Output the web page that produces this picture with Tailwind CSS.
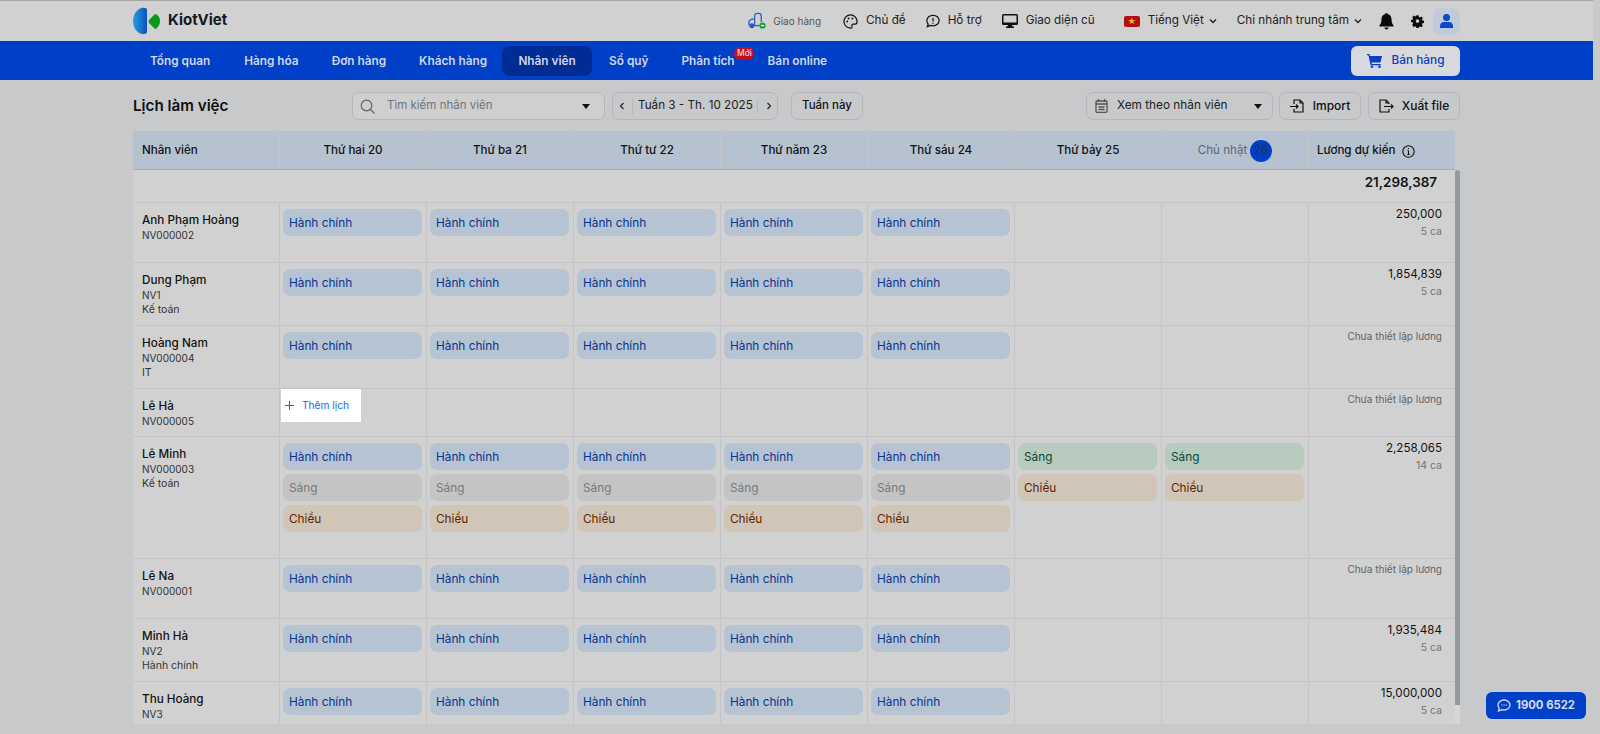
<!DOCTYPE html>
<html lang="en">
<head>
    <meta charset="UTF-8">
    <meta name="viewport" content="width=device-width, initial-scale=1.0">
    <title>KiotViet - Lịch làm việc</title>
    <script src="https://cdn.jsdelivr.net/npm/@tailwindcss/browser@4"></script>
</head>
<body class="bg-[#c8c9cb] text-[#111] font-['Inter',sans-serif] overflow-hidden">
<div class="relative h-[734px] w-[1600px] overflow-hidden">
    <div class="w-[1593px]">
        <!-- top bar -->
        <header class="h-[41px] bg-[#d1d1d1] border-t border-[#a6a6a6] pl-[133px] pr-[133px] flex items-center">
            <svg class="w-[28px] h-[28px] -mt-[1px]" viewBox="0 0 28 28">
                <defs><linearGradient id="lg" x1="0" x2="1" y1="0" y2="0"><stop offset="0" stop-color="#2aa0dc"/><stop offset="1" stop-color="#0a4fc0"/></linearGradient></defs>
                <path d="M9 1C4 2 0 7 0 14s4 12 9 13c3 .5 5-.5 5-2V3c0-1.500-2-2.500-5-2z" fill="url(#lg)"/>
                <path d="M16 13l6-6c2 0 5 3 5 7s-3 8-5 8l-6-6c-.5-.5-.5-2.500 0-3z" fill="#0a9a18"/>
            </svg>
            <span class="ml-[7px] text-[15px] font-bold text-[#141a24] -mt-[1px]">KiotViet</span>
            <div class="ml-auto flex items-center text-[11.700px] text-[#222]">
                <svg class="w-[18px] h-[18px]" viewBox="0 0 19 18" fill="none" stroke="#2558c8" stroke-width="1.300"><path d="M1 14V9l3-2h3v7M7 14h5M7 6V4c0-2 1-3 3-3h1c2 0 3 1 3 3v6"/><circle cx="4" cy="14" r="2" fill="#2558c8"/><rect x="12" y="10.500" width="6.500" height="6.500" rx="3" fill="#16a34a" stroke="none"/><path d="M13.800 13.800h3" stroke="#fff"/></svg>
                <span class="ml-[7px] text-[10px] text-[#555]">Giao hàng</span>
                <svg class="ml-[22px] w-[15px] h-[15px]" viewBox="0 0 16 16" fill="none" stroke="#111" stroke-width="1.300"><path d="M8 1a7 7 0 1 0 0 14c1.500 0 2-1 1.500-2-.5-1.200.3-2.200 1.500-2.200h2c1.300 0 2-1 2-2.500C15 4 12 1 8 1z"/><circle cx="4.500" cy="8" r="1" fill="#111" stroke="none"/><circle cx="6" cy="4.800" r="1" fill="#111" stroke="none"/><circle cx="10" cy="4.800" r="1" fill="#111" stroke="none"/></svg>
                <span class="ml-[8px]">Chủ đề</span>
                <svg class="ml-[20px] w-[14px] h-[14px]" viewBox="0 0 16 16" fill="none" stroke="#111" stroke-width="1.400"><path d="M8 1.500c4 0 7 2.600 7 6s-3 6-7 6c-1 0-2-.2-2.800-.5L1.500 14.500l1-3C1.500 10.500 1 9 1 7.500c0-3.400 3-6 7-6z"/><path d="M8 4.500v4M8 10v1"/></svg>
                <span class="ml-[8px]">Hỗ trợ</span>
                <svg class="ml-[20px] w-[16px] h-[14px]" viewBox="0 0 16 14" fill="#111"><path d="M1.500 0h13A1.500 1.500 0 0 1 16 1.500v8a1.500 1.500 0 0 1-1.500 1.500H10l.4 1.500H12V14H4v-1.500h1.600L6 11H1.500A1.500 1.500 0 0 1 0 9.500v-8A1.500 1.500 0 0 1 1.500 0zm0 1.500v7h13v-7z"/></svg>
                <span class="ml-[8px]">Giao diện cũ</span>
                <span class="ml-[29px] w-[16px] h-[11px] rounded-[2px] bg-[#b50d12] text-[#e8c81c] text-[8px] leading-[11px] text-center">★</span>
                <span class="ml-[8px]">Tiếng Việt</span>
                <svg class="ml-[5px] w-[8px] h-[6px]" viewBox="0 0 8 6" fill="none" stroke="#222" stroke-width="1.400"><path d="M1 1.500l3 3 3-3"/></svg>
                <span class="ml-[20px]">Chi nhánh trung tâm</span>
                <svg class="ml-[5px] w-[8px] h-[6px]" viewBox="0 0 8 6" fill="none" stroke="#222" stroke-width="1.400"><path d="M1 1.500l3 3 3-3"/></svg>
                <svg class="ml-[17px] w-[15px] h-[17px]" viewBox="0 0 15 17" fill="#0a0a0a"><path d="M7.500 0c.7 0 1.200.5 1.200 1.100C11 1.600 12.500 3.600 12.500 6c0 3.500.8 5 2 6.300.4.500.2 1.200-.6 1.200H1.100c-.8 0-1-.7-.6-1.200C1.700 11 2.500 9.500 2.500 6c0-2.400 1.500-4.400 3.800-4.900C6.300.5 6.800 0 7.500 0zM5.500 14.500h4a2 2 0 0 1-4 0z"/></svg>
                <svg class="ml-[17px] w-[13px] h-[13px]" viewBox="0 0 16 16" fill="#0a0a0a"><path fill-rule="evenodd" d="M6.500 0h3l.4 2.200 1.500.7 1.900-1.200 2.100 2.100-1.200 1.900.7 1.500 2.100.4v3l-2.200.4-.7 1.500 1.200 1.900-2.100 2.100-1.900-1.200-1.500.7-.4 2.100h-3l-.4-2.200-1.500-.7-1.900 1.200L.7 13.100l1.200-1.900-.7-1.500L-1 9.300v-3l2.200-.4.7-1.500L.7 2.500 2.800.4l1.900 1.200 1.500-.7zM8 5.500a2.500 2.500 0 1 0 0 5 2.500 2.500 0 0 0 0-5z" transform="translate(.9 .4) scale(.89)"/></svg>
                <span class="ml-[9px] w-[27px] h-[27px] rounded-[8px] bg-[#c0cbd9] flex items-center justify-center">
                    <svg class="w-[13px] h-[14px]" viewBox="0 0 13 14" fill="#0a48c8"><circle cx="6.500" cy="3.500" r="3.500"/><path d="M0 14v-2c0-2.500 2-4 4-4h5c2 0 4 1.500 4 4v2z"/></svg>
                </span>
            </div>
        </header>

        <!-- nav -->
        <nav class="h-[39px] bg-[#0040c8] pl-[133px] pr-[133px] pt-[1px] flex items-center text-[11.800px] font-semibold text-[#cfd6e8]">
            <a class="ml-[17px] pt-[2px]">Tổng quan</a>
            <a class="ml-[34px] pt-[2px]">Hàng hóa</a>
            <a class="ml-[33px] pt-[2px]">Đơn hàng</a>
            <a class="ml-[33px] pt-[2px]">Khách hàng</a>
            <a class="ml-[15px] h-[30px] w-[90px] pt-[2px] rounded-[8px] bg-[#002c94] flex items-center justify-center">Nhân viên</a>
            <a class="ml-[17px] pt-[2px]">Sổ quỹ</a>
            <a class="ml-[33px] pt-[2px] relative">Phân tích
                <span class="absolute left-[53px] -top-[4px] w-[20px] h-[13px] rounded-full bg-[#c50d25] text-[8.500px] leading-[13px] text-center font-medium text-[#e8d6d6]">Mới</span>
            </a>
            <a class="ml-[33px] pt-[2px]">Bán online</a>
            <button class="ml-auto w-[109px] h-[30px] rounded-[6px] bg-[#d8d8df] text-[#0a40c0] font-medium flex items-center justify-center gap-[10px] text-[11.800px]">
                <svg class="w-[15px] h-[14px]" viewBox="0 0 15 14" fill="#0a40c0"><path d="M0 0h2.500l.5 2h12l-1.500 6.500H4.500l.3 1.500h9v1.200H3.500L1.500 1.300H0z"/><circle cx="5" cy="12.700" r="1.300"/><circle cx="12.500" cy="12.700" r="1.300"/></svg>
                Bán hàng
            </button>
        </nav>

        <main class="pl-[133px] pr-[133px]">
            <!-- toolbar -->
            <div class="h-[51px] flex items-center text-[12.500px] pt-[2px] pb-[1px]">
                <h1 class="w-[219px] text-[15.200px] font-semibold text-[#111]">Lịch làm việc</h1>
                <div class="w-[253px] h-[28px] rounded-[7px] border border-[#b5b6ba] bg-[#cfcfd0] flex items-center pl-[7px] pr-[14px] text-[#70747a]">
                    <svg class="w-[15px] h-[15px]" viewBox="0 0 15 15" fill="none" stroke="#666" stroke-width="1.200"><circle cx="6.500" cy="6.500" r="5.300"/><path d="M10.500 10.500l4 4"/></svg>
                    <span class="ml-[12px] text-[11.500px] -mt-[1px]">Tìm kiếm nhân viên</span>
                    <span class="ml-auto w-0 h-0 border-x-[4px] border-x-transparent border-t-[5px] border-t-[#111]"></span>
                </div>
                <div class="ml-[7px] w-[166px] h-[28px] rounded-[7px] border border-[#b5b6ba] flex items-center text-[#222]">
                    <svg class="ml-[6px] w-[6px] h-[8px]" viewBox="0 0 6 8" fill="none" stroke="#222" stroke-width="1.200"><path d="M4.500 1L1.500 4l3 3"/></svg>
                    <span class="ml-[7px] h-[15px] border-l border-[#b5b6ba]"></span>
                    <span class="ml-[5px] w-[115px] text-[11.700px] whitespace-nowrap">Tuần 3 - Th. 10 2025</span>
                    <span class="ml-[4px] h-[15px] border-l border-[#b5b6ba]"></span>
                    <svg class="ml-[8px] w-[6px] h-[8px]" viewBox="0 0 6 8" fill="none" stroke="#222" stroke-width="1.200"><path d="M1.500 1l3 3-3 3"/></svg>
                </div>
                <button class="ml-[13px] w-[72px] h-[28px] rounded-[7px] border border-[#b5b6ba] font-medium text-[11.500px] text-[#111]">Tuần này</button>
                <div class="ml-auto w-[187px] h-[28px] rounded-[7px] border border-[#b5b6ba] flex items-center pl-[8px] pr-[10px] text-[#222]">
                    <svg class="w-[13px] h-[14px]" viewBox="0 0 13 14" fill="none" stroke="#555" stroke-width="1.300"><rect x="1" y="2" width="11" height="11.300" rx="1"/><path d="M1 5h11M3.500 0v3M9.500 0v3M3.500 8h6M3.500 10.500h6"/></svg>
                    <span class="ml-[9px] text-[11.800px]">Xem theo nhân viên</span>
                    <span class="ml-auto w-0 h-0 border-x-[4px] border-x-transparent border-t-[5px] border-t-[#111]"></span>
                </div>
                <button class="ml-[6px] w-[82px] h-[28px] rounded-[7px] border border-[#b5b6ba] flex items-center justify-center gap-[9px] font-medium text-[12px] text-[#111]">
                    <svg class="w-[14px] h-[14px]" viewBox="0 0 14 14" fill="none" stroke="#111" stroke-width="1.200"><path d="M4 5V1h6l3 3v9H4v-3"/><path d="M10 1v3h3M0 7.500h8M6 5.500l2 2-2 2"/></svg>
                    Import
                </button>
                <button class="ml-[7px] w-[92px] h-[28px] rounded-[7px] border border-[#b5b6ba] flex items-center justify-center gap-[8px] font-medium text-[12px] text-[#111]">
                    <svg class="w-[15px] h-[14px]" viewBox="0 0 15 14" fill="none" stroke="#111" stroke-width="1.200"><path d="M10 5V4L7 1H1v12h9v-3"/><path d="M7 1v3h3M5 7.500h9M12 5.500l2 2-2 2"/></svg>
                    Xuất file
                </button>
            </div>

            <!-- schedule table -->
            <div class="w-[1327px]">
                <div id="head" class="w-[1322px] h-[39px] grid grid-cols-[repeat(8,147px)_146px] bg-[#b6c2d0] border-b border-[#8fb0e0] text-[11.600px] font-medium text-[#111]"></div>
                <div class="h-[554px] overflow-hidden flex bg-[#d1d1d1]">
                    <div id="rows" class="w-[1322px] shrink-0"></div>
                    <div class="w-[5px] bg-[#d6d6d7]"><div class="h-[535px] rounded-t-[3px] bg-[#95989e]"></div></div>
                </div>
            </div>
        </main>
    </div>

    <button class="absolute left-[1486px] top-[692px] w-[100px] h-[27px] rounded-[6px] bg-[#0040c8] flex items-center justify-center gap-[5px] text-[11.300px] font-bold text-[#d6dcec]">
        <svg class="w-[14px] h-[13px]" viewBox="0 0 14 13" fill="none" stroke="#d6dcec" stroke-width="1.300"><path d="M7 1c3.300 0 6 2.200 6 5s-2.700 5-6 5c-.8 0-1.600-.1-2.300-.4L1.500 12l.8-2.800C1.500 8.300 1 7.200 1 6c0-2.800 2.700-5 6-5z"/><path d="M4.500 6h.8M6.700 6h.8M8.900 6h.8"/></svg>
        1900 6522
    </button>
</div>

<script>
    const cellBorder = "border-r border-[#c4c4c6]";
    const days = ["Thứ hai 20", "Thứ ba 21", "Thứ tư 22", "Thứ năm 23", "Thứ sáu 24", "Thứ bảy 25"];
    const chipStyles = {
        "Hành chính": "bg-[#b6c3d3] text-[#08348e]",
        "Sáng": "bg-[#c4c4c5] text-[#77797c]",
        "Chiều": "bg-[#d1c5b7] text-[#5f2500]",
        "Sáng2": "bg-[#b8cbbf] text-[#08483a]"
    };
    const HC = ["Hành chính"];
    const week = (d) => [d, d, d, d, d, [], []];
    const employees = [
        { name: "Anh Phạm Hoàng", code: "NV000002", h: "h-[60px]", days: week(HC), pay: "250,000", shifts: "5 ca" },
        { name: "Dung Phạm", code: "NV1", dept: "Kế toán", h: "h-[63px]", days: week(HC), pay: "1,854,839", shifts: "5 ca" },
        { name: "Hoàng Nam", code: "NV000004", dept: "IT", h: "h-[63px]", days: week(HC) },
        { name: "Lê Hà", code: "NV000005", h: "h-[48px]", days: week([]), add: true },
        { name: "Lê Minh", code: "NV000003", dept: "Kế toán", h: "h-[122px]",
          days: [...Array(5).fill(["Hành chính", "Sáng", "Chiều"]), ["Sáng2", "Chiều"], ["Sáng2", "Chiều"]], pay: "2,258,065", shifts: "14 ca" },
        { name: "Lê Na", code: "NV000001", h: "h-[60px]", days: week(HC) },
        { name: "Minh Hà", code: "NV2", dept: "Hành chính", h: "h-[63px]", days: week(HC), pay: "1,935,484", shifts: "5 ca" },
        { name: "Thu Hoàng", code: "NV3", h: "h-[63px]", days: week(HC), pay: "15,000,000", shifts: "5 ca" }
    ];

    const chip = (c) => `<div class="h-[27px] rounded-[7px] px-[6px] text-[11.800px] leading-[28px] ${chipStyles[c]}">${c.replace("2", "")}</div>`;

    document.getElementById("head").innerHTML =
        `<div class="pl-[9px] pt-[2px] flex items-center ${cellBorder}">Nhân viên</div>` +
        days.map(d => `<div class="pt-[2px] flex items-center justify-center ${cellBorder}">${d}</div>`).join("") +
        `<div class="pt-[2px] flex items-center justify-center text-[#5d6772] font-normal ${cellBorder}">Chủ nhật<span class="ml-[3px] w-[22px] h-[22px] rounded-full bg-[#0040c8] text-[#27324a] flex items-center justify-center">26</span></div>` +
        `<div class="pl-[8px] pt-[2px] flex items-center gap-[7px]">Lương dự kiến
            <svg class="w-[13px] h-[13px]" viewBox="0 0 13 13" fill="none" stroke="#111" stroke-width="1.100"><circle cx="6.500" cy="6.500" r="5.700"/><path d="M6.500 5.500v4M5.300 9.500h2.400M5.500 5.500h1M6.500 3v1"/></svg>
        </div>`;

    let html = `<div class="h-[33px] border-b border-[#c4c4c6] flex justify-end pr-[18px] pt-[2px] text-[13.400px] font-semibold leading-[20px]">21,298,387</div>`;
    for (const e of employees) {
        const addCell = `<div class="${cellBorder}"><div class="ml-[1px] w-[80px] h-[33px] bg-white flex items-center text-[10.200px] text-[#1a66e8]"><svg class="ml-[4px] w-[9px] h-[9px]" viewBox="0 0 9 9" stroke="#1a66e8"><path d="M4.500 0v9M0 4.500h9"/></svg><span class="ml-[8px]">Thêm lịch</span></div></div>`;
        html += `<div class="${e.h} grid grid-cols-[repeat(8,147px)_146px] border-b border-[#c4c4c6]">
            <div class="pl-[9px] pt-[9px] ${cellBorder}">
                <div class="text-[11.700px] leading-[17px] font-medium">${e.name}</div>
                <div class="text-[10px] leading-[13px] text-[#333]">${e.code}</div>
                ${e.dept ? `<div class="text-[10.500px] leading-[15px] text-[#333]">${e.dept}</div>` : ""}
            </div>
            ${e.days.map((d, i) => (e.add && i === 0) ? addCell
                : `<div class="pt-[6px] pl-[3px] pr-[4px] flex flex-col gap-[4px] ${cellBorder}">${d.map(chip).join("")}</div>`).join("")}
            <div class="pr-[13px] text-right">
                ${e.pay
                    ? `<div class="text-[11.600px] leading-[20px] mt-[1px] text-[#111]">${e.pay}</div><div class="text-[10.500px] leading-[14px] mt-[1px] text-[#70747a]">${e.shifts}</div>`
                    : `<div class="text-[10px] leading-[14px] mt-[3px] text-[#5f6368]">Chưa thiết lập lương</div>`}
            </div>
        </div>`;
    }
    document.getElementById("rows").innerHTML = html;
</script>
</body>
</html>
